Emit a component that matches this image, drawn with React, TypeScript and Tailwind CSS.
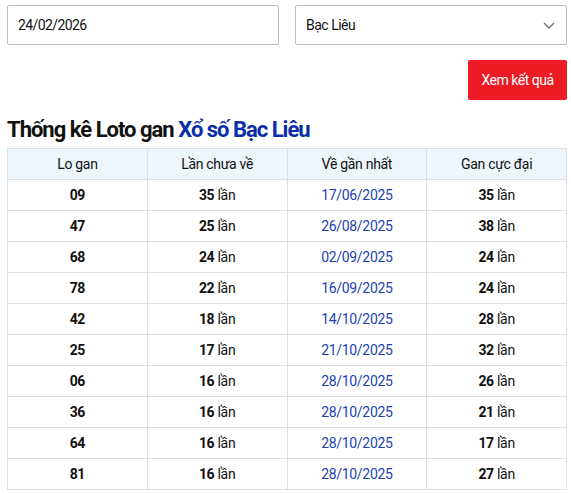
import React from "react";

const rows = [
  ["09", "35", "17/06/2025", "35"],
  ["47", "25", "26/08/2025", "38"],
  ["68", "24", "02/09/2025", "24"],
  ["78", "22", "16/09/2025", "24"],
  ["42", "18", "14/10/2025", "28"],
  ["25", "17", "21/10/2025", "32"],
  ["06", "16", "28/10/2025", "26"],
  ["36", "16", "28/10/2025", "21"],
  ["64", "16", "28/10/2025", "17"],
  ["81", "16", "28/10/2025", "27"],
];

export default function App() {
  return (
    <div className="w-[571px] h-[494px] bg-white overflow-hidden pl-[7px] pt-[5px] text-[#111]" style={{ fontFamily: "Roboto, 'Noto Sans', sans-serif" }}>
      <div className="w-[560px]">
        <div className="flex justify-between">
          <div className="w-[272px] shrink-0 h-[40px] border border-[#bdbdbd] rounded-[2px] flex items-center pl-[10px] text-[14px] tracking-[-0.6px]">24/02/2026</div>
          <div className="w-[272px] shrink-0 h-[40px] border border-[#bdbdbd] rounded-[2px] flex items-center justify-between pl-[10px] pr-[10px] text-[14px] tracking-[-0.5px]">
            <span>Bạc Liêu</span>
            <svg width="14" height="14" viewBox="0 0 14 14" fill="none" stroke="#777" strokeWidth="1.4"><path d="M2 5l5 5 5-5" /></svg>
          </div>
        </div>
        <div className="flex justify-end mt-[15px]">
          <div className="w-[99px] h-[40px] bg-[#ed1c24] rounded-[2px] text-white text-[14px] flex items-center justify-center tracking-[-0.5px]">Xem kết quả</div>
        </div>
        <h2 className="mt-[17px] text-[22px] font-bold leading-[26px] tracking-[-1px]">
          Thống kê Loto gan <span className="text-[#0a2ea8]">Xổ số Bạc Liêu</span>
        </h2>
        <table className="mt-[5px] w-[560px] border-collapse text-[14px] tracking-[-0.3px] table-fixed">
          <thead>
            <tr className="bg-[#eef6fd]">
              {["Lo gan", "Lần chưa về", "Về gần nhất", "Gan cực đại"].map((h) => (
                <th key={h} className="h-[31px] border border-[#dcdfe3] font-normal text-center">{h}</th>
              ))}
            </tr>
          </thead>
          <tbody>
            {rows.map((r) => (
              <tr key={r[0]}>
                <td className="h-[31px] border border-[#dcdfe3] text-center font-bold">{r[0]}</td>
                <td className="h-[31px] border border-[#dcdfe3] text-center"><b>{r[1]}</b> lần</td>
                <td className="h-[31px] border border-[#dcdfe3] text-center text-[#1c3fb3]">{r[2]}</td>
                <td className="h-[31px] border border-[#dcdfe3] text-center"><b>{r[3]}</b> lần</td>
              </tr>
            ))}
          </tbody>
        </table>
      </div>
    </div>
  );
}
